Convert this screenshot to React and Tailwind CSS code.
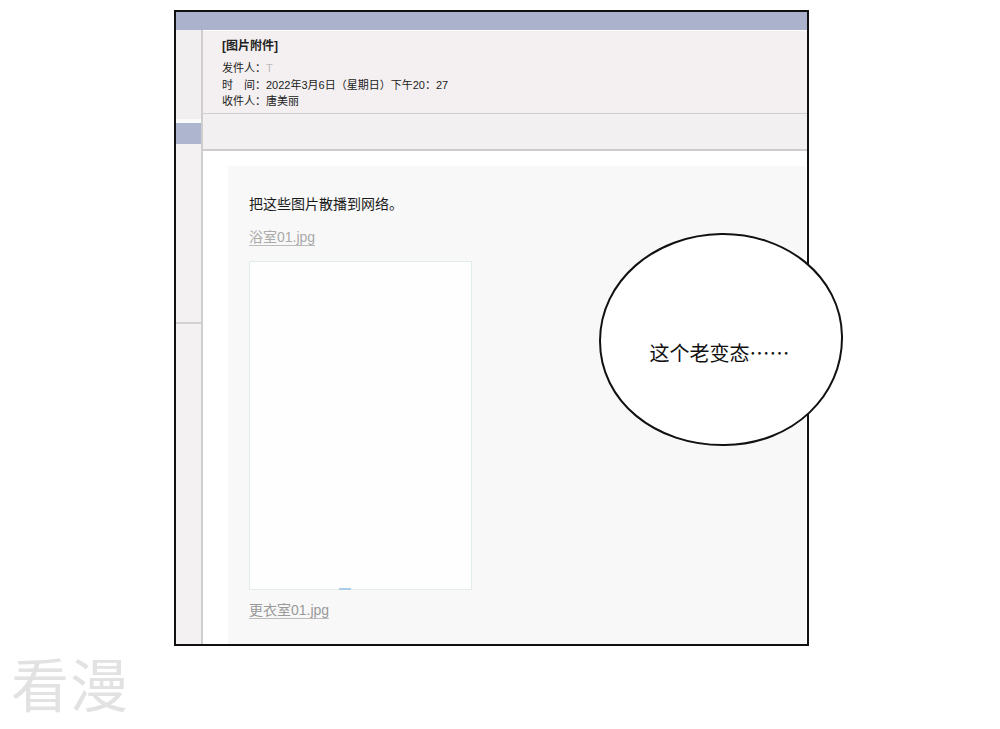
import React from "react";

const cjk = { fontFamily: '"Liberation Sans", "Noto Sans CJK SC", "Noto Sans", sans-serif' };
const cjkFirst = { fontFamily: '"Noto Sans CJK SC", "Noto Sans", sans-serif' };

export default function App() {
  return (
    <div className="w-[1000px] h-[729px] bg-white relative overflow-hidden" style={cjk}>
      <div className="pt-[10px] pl-[174px]">
        <div className="w-[635px] h-[636px] border-2 border-[#111] flex flex-col bg-white">
          <div className="h-[18px] bg-[#aab3cb] shrink-0" />
          <div className="flex flex-1 min-h-0">
            {/* left column */}
            <div className="w-[27px] shrink-0 border-r-2 border-[#cfcdce] flex flex-col bg-[#f3f0f1]">
              <div className="h-[89px] bg-[#f1eff0]" />
              <div className="h-[4px] bg-[#fbfafa]" />
              <div className="h-[21px] bg-[#aeb5cf]" />
              <div className="h-[178px] bg-[#f4f1f2]" />
              <div className="h-[2px] bg-[#d3d1d2]" />
              <div className="flex-1 bg-[#f4f1f2]" />
            </div>
            {/* main */}
            <div className="flex-1 flex flex-col min-w-0">
              <div className="h-[84px] bg-[#f4f0f1] pl-[19px] pt-[7px] text-[#222] border-b border-t border-t-white border-b-[#cfcfcf]">
                <div className="text-[12px] font-bold leading-[16px]">[图片附件]</div>
                <div className="text-[11px] leading-[16.5px] mt-[6px]">发件人：<span className="text-[#bbb]">T</span></div>
                <div className="text-[11px] leading-[16.5px]">时　间：2022年3月6日（星期日）下午20：27</div>
                <div className="text-[11px] leading-[16.5px]">收件人：唐美丽</div>
              </div>
              <div className="h-[37px] bg-[#f3f0f1] border-b-2 border-[#cdcdcd]" />
              <div className="flex-1 bg-white pl-[25px] pt-[15px] flex">
                <div className="flex-1 bg-[#f8f8f8] pl-[21px] pt-[28px] mr-[1px]">
                  <div className="text-[14px] leading-[20px] text-[#1a1a1a]">把这些图片散播到网络。</div>
                  <div className="mt-[14px] text-[14px] leading-[19px] text-[#aaa]">
                    <span className="border-b border-[#bbb]">浴室01.jpg</span>
                  </div>
                  <div className="mt-[14px] w-[223px] h-[329px] bg-[#fefefe] border border-[#e3ecec] relative">
                    <div className="absolute bottom-[-1px] left-[89px] w-[12px] h-[2px] bg-[#a9cde6]" />
                  </div>
                  <div className="mt-[11px] text-[14px] leading-[19px] text-[#999]">
                    <span className="border-b border-[#bbb]">更衣室01.jpg</span>
                  </div>
                </div>
              </div>
            </div>
          </div>
        </div>
      </div>

      <div className="pl-[11px] pt-[5px] text-[58px] leading-[62px] text-[#e2e2e2] tracking-[1px]" style={cjkFirst}>看漫</div>

      {/* speech bubble */}
      <div className="absolute left-[597px] top-[231px] w-[248px] h-[217px]">
        <svg width="248" height="217" viewBox="0 0 248 217" className="absolute inset-0">
          <path
            d="M124 3 C 188 2, 244 45, 245 105 C 246 165, 196 213, 128 214 C 58 215, 3 170, 3 110 C 3 50, 58 4, 124 3 Z"
            fill="#fff"
            stroke="#111"
            strokeWidth="2"
          />
        </svg>
        <div className="absolute left-[-3px] right-0 top-[110px] flex justify-center text-[20px] leading-[24px] text-[#111]" style={cjkFirst}>
          这个老变态……
        </div>
      </div>
    </div>
  );
}
